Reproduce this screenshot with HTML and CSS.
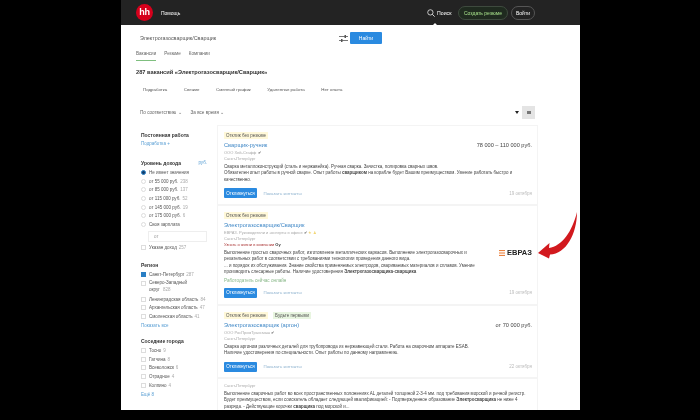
FILE: index.html
```html
<!DOCTYPE html>
<html lang="en">
<head>
  <meta charset="UTF-8" />
  <title>Поиск вакансий</title>
  <link rel="stylesheet" href="styles.css">
</head>
<body>
  <div class="page">

    <!-- Header -->
    <div class="header">
      <div class="logo">hh</div>
      <a class="help">Помощь</a>
      <div class="header-right">
        <svg class="search-icon" width="8" height="8" viewBox="0 0 9 9"><circle cx="3.8" cy="3.8" r="3" fill="none" stroke="#fff" stroke-width="0.8"/><path d="M6 6 L8.6 8.6" stroke="#fff" stroke-width="0.9"/></svg>
        <a class="search-link">Поиск</a>
        <a class="pill pill-green">Создать резюме</a>
        <a class="pill">Войти</a>
      </div>
      <span class="notch"></span>
    </div>

    <!-- Search -->
    <div class="search-row">
      <div class="search-text">Электрогазосварщик/Сварщик</div>
      <svg class="filter-icon" width="9" height="9" viewBox="0 0 9 9"><path d="M0 2.5H9M0 6.5H9" stroke="#555" stroke-width="0.8"/><path d="M5.5 1H7V4H5.5ZM2 5H3.5V8H2Z" fill="#555"/></svg>
      <button class="find-btn">Найти</button>
    </div>

    <div class="tabs">
      <a class="tab active">Вакансии</a>
      <a class="tab">Резюме</a>
      <a class="tab">Компании</a>
    </div>

    <h1 class="title">287 вакансий «Электрогазосварщик/Сварщик»</h1>

    <div class="chips">
      <span class="chip">Подработка</span>
      <span class="chip">Свежие</span>
      <span class="chip">Сменный график</span>
      <span class="chip">Удаленная работа</span>
      <span class="chip">Нет опыта</span>
    </div>

    <div class="sort-row">
      <span class="sort sort-first">По соответствию ⌄</span>
      <span class="sort">За все время ⌄</span>
      <span class="caret"></span>
      <span class="view-toggle"><i></i></span>
    </div>

    <div class="columns">

      <!-- Filters -->
      <div class="sidebar">
        <div class="group group-first">
          <div class="group-title">Постоянная работа</div>
          <a class="link">Подработка +</a>
        </div>

        <div class="group group-income">
          <div class="group-title with-unit">Уровень дохода <a class="link">руб.</a></div>
          <div class="opt"><span class="radio on"></span>Не имеет значения</div>
          <div class="opt"><span class="radio"></span>от 55 000 руб. <em>238</em></div>
          <div class="opt"><span class="radio"></span>от 85 000 руб. <em>137</em></div>
          <div class="opt"><span class="radio"></span>от 115 000 руб. <em>52</em></div>
          <div class="opt"><span class="radio"></span>от 145 000 руб. <em>19</em></div>
          <div class="opt"><span class="radio"></span>от 175 000 руб. <em>6</em></div>
          <div class="opt"><span class="radio"></span>Своя зарплата</div>
          <div class="salary-input">от</div>
          <div class="opt"><span class="check"></span>Указан доход <em>257</em></div>
        </div>

        <div class="group group-region">
          <div class="group-title">Регион</div>
          <div class="opt"><span class="check on"></span>Санкт-Петербург <em>287</em></div>
          <div class="opt opt-two"><span class="check"></span><span>Северо-Западный<br>округ <em>828</em></span></div>
          <div class="opt"><span class="check"></span>Ленинградская область <em>84</em></div>
          <div class="opt"><span class="check"></span>Архангельская область <em>47</em></div>
          <div class="opt"><span class="check"></span>Смоленская область <em>41</em></div>
          <a class="link more">Показать все</a>
        </div>

        <div class="group group-cities">
          <div class="group-title">Соседние города</div>
          <div class="opt"><span class="check"></span>Тосно <em>9</em></div>
          <div class="opt"><span class="check"></span>Гатчина <em>8</em></div>
          <div class="opt"><span class="check"></span>Всеволожск <em>6</em></div>
          <div class="opt"><span class="check"></span>Отрадное <em>4</em></div>
          <div class="opt"><span class="check"></span>Колпино <em>4</em></div>
          <a class="link more">Ещё 8</a>
        </div>
      </div>

      <!-- Vacancies -->
      <div class="results">
        <div class="card card-1">
          <div class="tags"><span class="tag">Отклик без резюме</span></div>
          <div class="card-head">
            <a class="vacancy">Сварщик-ручник</a>
            <span class="salary">78 000 – 110 000 руб.</span>
          </div>
          <div class="company">ООО Хей-Стафф <span class="tick">✔</span></div>
          <div class="city">Санкт-Петербург</div>
          <div class="desc">Сварка металлоконструкций (сталь и нержавейка). Ручная сварка. Зачистка, полировка сварных швов.<br>Обязателен опыт работы в ручной сварке. Опыт работы <b>сварщиком</b> на корабле будет Вашим преимуществом. Умение работать быстро и<br>качественно.</div>
          <div class="card-foot">
            <button class="reply-btn">Откликнуться</button>
            <a class="contacts">Показать контакты</a>
            <span class="date">19 октября</span>
          </div>
        </div>

        <div class="card card-2">
          <div class="tags"><span class="tag">Отклик без резюме</span></div>
          <div class="card-head">
            <a class="vacancy">Электрогазосварщик/Сварщик</a>
          </div>
          <div class="company">ЕВРАЗ. Руководители и эксперты в офисе <span class="tick">✔</span> <span class="star">★</span> <span class="star">♟</span></div>
          <div class="city">Санкт-Петербург</div>
          <div class="know">Узнать о жизни в компании <b>Oy</b></div>
          <div class="card-body">
            <div class="desc">Выполнение простых сварочных работ, изготовление металлических каркасов. Выполнение электрогазосварочных и<br>резательных работ в соответствии с требованиями технологии проведения данного вида.<br>... и порядок их обслуживания. Знание свойства применяемых электродов, свариваемых материалов и сплавов. Умение<br>производить слесарные работы. Наличие удостоверения <b>Электрогазосварщика</b>-<b>сварщика</b></div>
            <div class="evraz">
              <svg width="6" height="6" viewBox="0 0 6 6"><path d="M0 0.6H6M0 3H6M0 5.4H6" stroke="#e8742a" stroke-width="1"/></svg>
              <span>ЕВРАЗ</span>
            </div>
          </div>
          <a class="online">Работодатель сейчас онлайн</a>
          <div class="card-foot foot-tight">
            <button class="reply-btn">Откликнуться</button>
            <a class="contacts">Показать контакты</a>
            <span class="date">19 октября</span>
          </div>
        </div>

        <div class="card card-3">
          <div class="tags"><span class="tag">Отклик без резюме</span><span class="tag tag-green">Будьте первыми</span></div>
          <div class="card-head">
            <a class="vacancy">Электрогазосварщик (аргон)</a>
            <span class="salary">от 70 000 руб.</span>
          </div>
          <div class="company">ООО РосПромТрансмаш <span class="tick">✔</span></div>
          <div class="city">Санкт-Петербург</div>
          <div class="desc">Сварка аргоном различных деталей для трубопровода из нержавеющей стали. Работа на сварочном аппарате ESAB.<br>Наличие удостоверения по специальности. Опыт работы по данному направлению.</div>
          <div class="card-foot">
            <button class="reply-btn">Откликнуться</button>
            <a class="contacts">Показать контакты</a>
            <span class="date">22 октября</span>
          </div>
        </div>

        <div class="card card-4">
          <div class="city">Санкт-Петербург</div>
          <div class="desc">Выполнение сварочных работ во всех пространственных положениях AL деталей толщиной 2-3-4 мм. под требования морской и речной регистр.<br>Будет преимуществом, если соискатель обладает следующей квалификацией: - Подтвержденное образование <b>Электросварщика</b> не ниже 4<br>разряда. - Действующие корочки <b>сварщика</b> под морской и...</div>
        </div>
      </div>
    </div>

    <!-- Annotation arrow over the page -->
    <svg class="arrow" width="42" height="50" viewBox="0 0 42 50">
      <path d="M0 43 L11.5 33 L11 38 C24 36 34 22 39 2 C39 24 28 44 12 44.5 L11 48.5 Z" fill="#d2191e"/>
    </svg>
  </div>
</body>
</html>
```

FILE: styles.css
```css
html, body {
  margin: 0;
  height: 420px;
  overflow: hidden;
}

body {
  background-color: #000;
  font-family: "Liberation Sans", Arial, sans-serif;
  color: #333;
  font-size: 5px;
}

a {
  text-decoration: none;
}

/* the reference is a soft, scaled-down capture */
.page {
  position: relative;
  width: 459px;
  height: 410px;
  margin-left: 121px;
  overflow: hidden;
  background-color: #fff;
  filter: blur(0.35px);
}

/* Header */
.header {
  position: relative;
  display: flex;
  align-items: center;
  height: 25px;
  padding: 0 45px 0 15px;
  background-color: #232323;
  color: #fff;
}

.logo {
  width: 17px;
  height: 17px;
  border-radius: 50%;
  background-color: #d6001c;
  color: #fff;
  font-size: 9px;
  font-weight: bold;
  line-height: 16px;
  text-align: center;
  letter-spacing: -0.3px;
}

.help {
  margin-left: 8px;
  font-size: 5px;
}

.header-right {
  display: flex;
  align-items: center;
  margin-left: auto;
}

.search-link {
  margin: 0 6.5px 0 2px;
  font-size: 5.2px;
}

.pill {
  padding: 0 4px;
  height: 12px;
  border: 1px solid #555;
  border-radius: 7px;
  font-size: 5px;
  line-height: 12px;
  margin-left: 3px;
}

.pill-green {
  margin-left: 0;
  padding: 0 5px;
  border-color: #3e4a3e;
  background-color: #1f2a1f;
  color: #a6e08a;
}

.notch {
  position: absolute;
  left: 312px;
  bottom: 0;
  border-left: 2px solid transparent;
  border-right: 2px solid transparent;
  border-bottom: 2px solid #fff;
}

/* Search */
.search-row {
  display: flex;
  align-items: center;
  height: 12px;
  margin-top: 7px;
  padding-left: 19px;
}

.search-text {
  width: 199px;
  font-size: 5.4px;
  color: #555;
}

.find-btn {
  width: 32px;
  height: 12px;
  margin-left: 2px;
  padding: 0;
  border: none;
  border-radius: 1px;
  background-color: #2a8ae0;
  color: #fff;
  font-family: inherit;
  font-size: 5px;
}

.tabs {
  display: flex;
  margin-top: 4px;
  padding-left: 15px;
}

.tab {
  padding: 3px 0;
  margin-right: 8px;
  font-size: 4.6px;
  line-height: 6px;
  color: #666;
  border-bottom: 1px solid transparent;
}

.tab.active {
  border-bottom-color: #7fbf7f;
}

.title {
  margin: 7px 0 0 15px;
  font-size: 5.7px;
  line-height: 8px;
  font-weight: bold;
  color: #333;
}

.chips {
  display: flex;
  margin-top: 10px;
  padding-left: 22px;
  font-size: 4.4px;
  line-height: 7px;
  color: #555;
}

.chip {
  margin-right: 16.5px;
}

.sort-row {
  display: flex;
  align-items: center;
  height: 13px;
  margin-top: 13px;
  padding: 0 45px 0 19px;
  font-size: 4.6px;
  color: #666;
}

.sort-first {
  margin-right: 9px;
}

.caret {
  width: 0;
  height: 0;
  margin-left: auto;
  margin-right: 3px;
  border-left: 2px solid transparent;
  border-right: 2px solid transparent;
  border-top: 3px solid #222;
}

.view-toggle {
  display: flex;
  align-items: center;
  justify-content: center;
  width: 13px;
  height: 13px;
  background-color: #e4e4e4;
}

.view-toggle i {
  width: 4px;
  height: 3px;
  background-color: #777;
}

/* Columns */
.columns {
  display: flex;
  margin-top: 6px;
  padding-left: 19px;
}

.sidebar {
  box-sizing: border-box;
  width: 77px;
  padding: 0 10px 0 1px;
  flex-shrink: 0;
  color: #555;
}

.group-first { margin-top: 7px; }
.group-income { margin-top: 12px; }
.group-region { margin-top: 10.6px; }
.group-cities { margin-top: 8px; }

.group-title {
  margin-bottom: 2px;
  font-size: 5px;
  font-weight: bold;
  line-height: 6px;
  color: #333;
}

.with-unit {
  display: flex;
  justify-content: space-between;
}

.with-unit .link {
  font-size: 4.5px;
  line-height: 6px;
  margin-top: 0;
  font-weight: normal;
}

.link {
  display: block;
  font-size: 4.5px;
  line-height: 8px;
  color: #5a9fd4;
  margin-top: 1px;
}

.more {
  margin-top: 1.4px;
}

.opt {
  display: flex;
  align-items: center;
  height: 8.7px;
  font-size: 4.5px;
  white-space: nowrap;
}

.opt-two {
  box-sizing: border-box;
  height: 16px;
  padding-top: 1.5px;
  line-height: 6.5px;
  align-items: flex-start;
}

.opt em {
  margin-left: 2px;
  font-style: normal;
  color: #aaa;
}

.opt-two .check {
  margin-top: 1px;
}

.radio, .check {
  flex-shrink: 0;
  width: 3px;
  height: 3px;
  margin-right: 3px;
  border: 1px solid #ddd;
  background-color: #fff;
}

.radio {
  border-radius: 50%;
}

.radio.on {
  border-color: #2a7fc4;
  background-color: #123f6e;
}

.check.on {
  border-color: #2a7fc4;
  background-color: #2a7fc4;
}

.salary-input {
  box-sizing: border-box;
  height: 11px;
  margin: 2px 0 1px 7px;
  padding-left: 5px;
  border: 1px solid #eee;
  font-size: 4.5px;
  line-height: 9px;
  color: #999;
}

/* Vacancy cards */
.results {
  display: flex;
  flex-direction: column;
  width: 321px;
}

.card {
  flex-shrink: 0;
  box-sizing: border-box;
  padding: 6px 5px 0 6px;
  border: 1px solid #f4f4f4;
}

.card-1 { height: 80px; }
.card-2 { height: 100px; }
.card-3 { height: 73px; }

.card-4 {
  padding-top: 4px;
}

.tags {
  display: flex;
  gap: 5px;
  height: 7px;
}

.tag {
  padding: 0 2px;
  background-color: #fff8d8;
  font-size: 4.5px;
  line-height: 7px;
  color: #555;
}

.tag-green {
  background-color: #e8f5e0;
}

.card-head {
  display: flex;
  justify-content: space-between;
  align-items: center;
  height: 9px;
  margin-top: 1.5px;
}

.vacancy {
  font-size: 5.7px;
  color: #3f87c6;
}

.salary {
  font-size: 5.6px;
  color: #444;
}

.company {
  margin-top: 0.5px;
}

.company, .city, .know {
  font-size: 4px;
  line-height: 6px;
  color: #aaa;
}

.tick {
  color: #555;
}

.star {
  color: #f2d675;
}

.know {
  color: #a33;
}

.know b {
  color: #333;
}

.desc {
  margin-top: 1.8px;
  font-size: 4.47px;
  line-height: 6.4px;
  color: #444;
  white-space: nowrap;
}

.card-body {
  display: flex;
  justify-content: space-between;
  align-items: flex-start;
}

.evraz {
  display: flex;
  align-items: center;
  gap: 2px;
  margin-top: 1.8px;
  font-size: 7.5px;
  line-height: 6px;
  font-weight: bold;
  color: #222;
}

.online {
  display: block;
  margin-top: 2.4px;
  font-size: 4.6px;
  line-height: 6px;
  color: #8ab98a;
}

.card-foot {
  display: flex;
  align-items: center;
  margin-top: 5px;
}

.foot-tight {
  margin-top: 4px;
}

.reply-btn {
  width: 33px;
  height: 10px;
  padding: 0;
  border: none;
  border-radius: 1px;
  background-color: #2a8ae0;
  color: #fff;
  font-family: inherit;
  font-size: 4.5px;
}

.contacts {
  margin-left: 6.5px;
  font-size: 4.4px;
  color: #8fb3cf;
}

.date {
  margin-left: auto;
  font-size: 4.5px;
  color: #bbb;
}

.arrow {
  position: absolute;
  left: 417px;
  top: 210px;
}
```
